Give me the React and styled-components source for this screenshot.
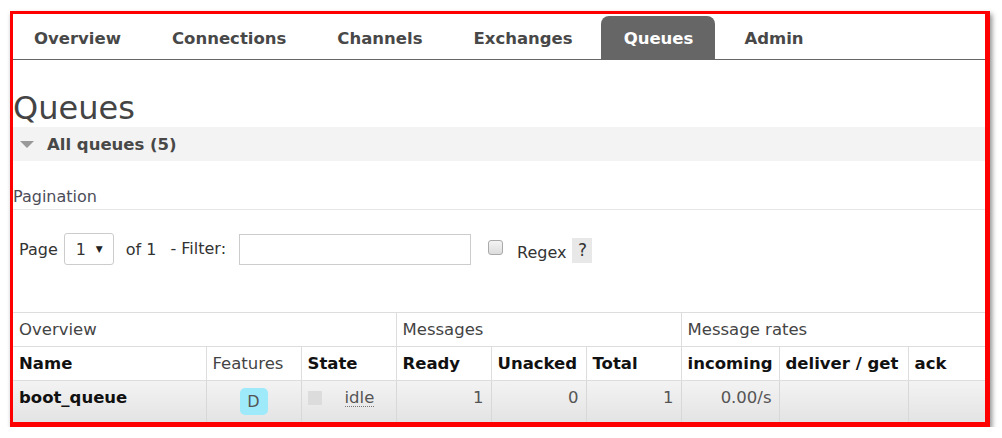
import React from 'react'
import styled, { createGlobalStyle } from 'styled-components'

const GlobalStyle = createGlobalStyle`
  html, body {
    margin: 0;
    padding: 0;
    background: #ffffff;
  }
  body {
    font-family: "DejaVu Sans", Verdana, sans-serif;
    color: #444;
  }
`

const tabs = ['Overview', 'Connections', 'Channels', 'Exchanges', 'Queues', 'Admin']

const columns = [
  { title: 'Name', width: 193 },
  { title: 'Features', width: 95, light: true },
  { title: 'State', width: 95 },
  { title: 'Ready', width: 95 },
  { title: 'Unacked', width: 95 },
  { title: 'Total', width: 95 },
  { title: 'incoming', width: 98 },
  { title: 'deliver / get', width: 129 },
  { title: 'ack', width: 77 },
]

function App() {
  return (
    <>
      <GlobalStyle />
      <Frame>
        <Nav>
          {tabs.map((t) => (
            <Tab key={t} $active={t === 'Queues'}>{t}</Tab>
          ))}
        </Nav>

        <Heading>Queues</Heading>

        <SectionBar>
          <Arrow />
          <SectionTitle>All queues (5)</SectionTitle>
        </SectionBar>

        <SubTitle>Pagination</SubTitle>

        <FilterRow>
          <Label>Page</Label>
          <Select>
            <span>1</span>
            <Caret>▼</Caret>
          </Select>
          <Label $gap={12}>of 1</Label>
          <Label $gap={14} $shift={-1}>- Filter:</Label>
          <TextInput />
          <Checkbox />
          <Label $gap={14} $shift={3}>Regex</Label>
          <Help>?</Help>
        </FilterRow>

        <Table>
          <colgroup>
            {columns.map((c) => (
              <col key={c.title} style={{ width: c.width }} />
            ))}
          </colgroup>
          <thead>
            <tr>
              <GroupCell colSpan={3}>Overview</GroupCell>
              <GroupCell colSpan={3}>Messages</GroupCell>
              <GroupCell colSpan={3}>Message rates</GroupCell>
            </tr>
            <tr>
              {columns.map((c) => (
                <HeadCell key={c.title} $light={c.light}>{c.title}</HeadCell>
              ))}
            </tr>
          </thead>
          <tbody>
            <DataRow>
              <NameCell>boot_queue</NameCell>
              <Cell>
                <Badge>D</Badge>
              </Cell>
              <Cell>
                <StateWrap>
                  <StateDot />
                  <Idle>idle</Idle>
                </StateWrap>
              </Cell>
              <Cell $num>1</Cell>
              <Cell $num>0</Cell>
              <Cell $num>1</Cell>
              <Cell $num>0.00/s</Cell>
              <Cell />
              <Cell />
            </DataRow>
          </tbody>
        </Table>
      </Frame>
    </>
  )
}

export default App

const Frame = styled.div`
  margin: 11px 0 0 10px;
  width: 972px;
  height: 408px;
  background: #fff;
  border: 3px solid #ff0000;
  border-right-width: 5px;
  border-bottom-width: 5px;
  box-shadow: 2px 3px 5px rgba(0, 0, 0, 0.45);
  overflow: hidden;
`

const Nav = styled.div`
  display: flex;
  align-items: flex-end;
  height: 46px;
  margin-left: -2px;
  border-bottom: 1px solid #666;
  box-sizing: border-box;
`

const Tab = styled.div`
  height: 43px;
  line-height: 43px;
  padding: 1px 22px 0 23px;
  box-sizing: border-box;
  margin-right: 6px;
  font-size: 16.5px;
  font-weight: bold;
  color: ${(p) => (p.$active ? '#fff' : '#484848')};
  background: ${(p) => (p.$active ? '#666' : 'transparent')};
  border-radius: 8px 8px 0 0;
  white-space: nowrap;
`

const Heading = styled.h1`
  margin: 29px 0 0;
  font-size: 32px;
  line-height: 38px;
  font-weight: normal;
  color: #444;
`

const SectionBar = styled.div`
  display: flex;
  align-items: center;
  height: 34px;
  background: #f3f3f3;
`

const Arrow = styled.span`
  width: 0;
  height: 0;
  margin: 0 13px 0 7px;
  border-left: 7px solid transparent;
  border-right: 7px solid transparent;
  border-top: 7px solid #999;
`

const SectionTitle = styled.h2`
  margin: 0;
  font-size: 16.5px;
  font-weight: bold;
  color: #484848;
`

const SubTitle = styled.h3`
  margin: 26px 0 0;
  padding-bottom: 2px;
  font-size: 16px;
  line-height: 20px;
  font-weight: normal;
  color: #4d4d5a;
  border-bottom: 1px solid #e6e6e6;
`

const FilterRow = styled.div`
  display: flex;
  align-items: center;
  height: 32px;
  margin-top: 23px;
  padding-left: 6px;
`

const Label = styled.span`
  margin-left: ${(p) => p.$gap || 0}px;
  position: relative;
  top: ${(p) => p.$shift || 0}px;
  font-size: 16px;
  color: #333;
  white-space: nowrap;
`

const Select = styled.div`
  display: flex;
  align-items: center;
  justify-content: space-between;
  box-sizing: border-box;
  width: 50px;
  height: 32px;
  margin-left: 6px;
  padding: 0 10px 0 11px;
  border: 1px solid #ccc;
  border-radius: 3px;
  font-size: 16px;
  color: #333;
`

const Caret = styled.span`
  font-size: 9px;
  color: #222;
`

const TextInput = styled.input`
  box-sizing: border-box;
  width: 232px;
  height: 31px;
  margin-left: 13px;
  border: 1px solid #ccc;
  background: #fff;
`

const Checkbox = styled.span`
  box-sizing: border-box;
  width: 15px;
  height: 15px;
  margin-left: 17px;
  position: relative;
  top: -2px;
  border: 1px solid #aaa;
  border-radius: 3px;
  background: linear-gradient(#f4f4f4, #dcdcdc);
`

const Help = styled.span`
  width: 20px;
  height: 25px;
  margin-left: 6px;
  position: relative;
  top: 1px;
  line-height: 25px;
  text-align: center;
  font-size: 17px;
  color: #333;
  background: #e8e8e8;
`

const Table = styled.table`
  width: 972px;
  margin-top: 47px;
  border-collapse: collapse;
  table-layout: fixed;
  border-top: 1px solid #ddd;
`

const GroupCell = styled.th`
  height: 33px;
  padding: 0 6px;
  text-align: left;
  font-size: 16.5px;
  font-weight: normal;
  color: #444;
  white-space: nowrap;
  border: 1px solid #ddd;
  border-top: none;
  &:first-child { border-left: none; }
  &:last-child { border-right: none; }
`

const HeadCell = styled.th`
  height: 33px;
  padding: 0 6px;
  text-align: left;
  font-size: 16.5px;
  font-weight: ${(p) => (p.$light ? 'normal' : 'bold')};
  color: ${(p) => (p.$light ? '#444' : '#111')};
  white-space: nowrap;
  border: 1px solid #ddd;
  &:first-child { border-left: none; }
  &:last-child { border-right: none; }
`

const DataRow = styled.tr`
  background: linear-gradient(#f3f3f3, #e3e3e3);
`

const Cell = styled.td`
  height: 42px;
  vertical-align: top;
  padding: 7px ${(p) => (p.$num ? 7 : 6)}px 0 6px;
  text-align: ${(p) => (p.$num ? 'right' : 'left')};
  font-size: 16.5px;
  color: #555;
  white-space: nowrap;
  border-left: 1px solid #d8d8d8;
  border-right: 1px solid #d8d8d8;
  box-sizing: border-box;
  &:last-child { border-right: none; }
`

const NameCell = styled(Cell)`
  border-left: none;
  font-weight: bold;
  color: #111;
`

const Badge = styled.div`
  width: 28px;
  height: 27px;
  line-height: 27px;
  margin: 0 auto;
  border-radius: 5px;
  background: #9eeafb;
  color: #555;
  text-align: center;
  font-size: 16px;
`

const StateWrap = styled.div`
  display: flex;
  align-items: center;
  height: 20px;
  gap: 23px;
`

const StateDot = styled.span`
  width: 14px;
  height: 14px;
  background: #dcdcdc;
`

const Idle = styled.span`
  color: #555;
  border-bottom: 1px dotted #777;
  line-height: 17px;
`
